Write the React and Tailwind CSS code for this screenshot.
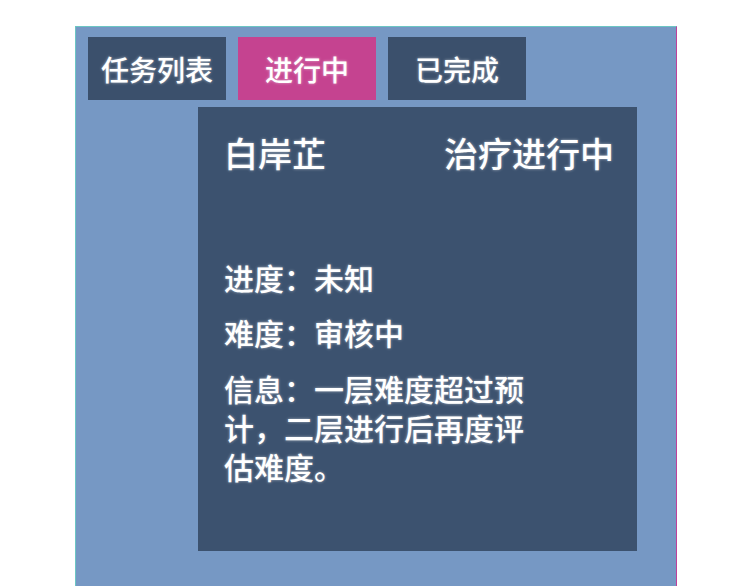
import React from "react";

const tabs = [
  { label: "任务列表", active: false },
  { label: "进行中", active: true },
  { label: "已完成", active: false },
];

const glow = "[text-shadow:0_0_3px_rgba(255,255,255,0.55)]";

const App = () => {
  return (
    <div className="w-[750px] h-[586px] overflow-hidden bg-white font-['Noto_Sans_CJK_SC','Noto_Sans',sans-serif]">
      <div className="ml-[75px] mt-[26px] w-[602px] h-[600px] bg-[#7698c4] border-t border-l border-t-[#6cc6c4] border-l-[#6cc6c4] border-r border-r-[#c0409a]">
        {/* tabs */}
        <div className="flex gap-3 pl-3 pt-[10px]">
          {tabs.map((t) => (
            <div
              key={t.label}
              className={`w-[138px] h-[63px] flex items-center justify-center text-white text-[28px] font-medium ${glow} ${
                t.active ? "bg-[#c54390]" : "bg-[#3b506c]"
              }`}
            >
              {t.label}
            </div>
          ))}
        </div>

        {/* card */}
        <div className="ml-[122px] mt-[7px] w-[439px] h-[444px] bg-[#3c526f] pl-[26px] pr-[23px] pt-[23px] text-white font-medium">
          <div className={`flex justify-between text-[34px] leading-[46px] ${glow}`}>
            <span>白岸芷</span>
            <span>治疗进行中</span>
          </div>
          <p className={`mt-[81px] text-[30px] leading-[40px] ${glow}`}>进度：未知</p>
          <p className={`mt-[15px] text-[30px] leading-[40px] ${glow}`}>难度：审核中</p>
          <p className={`mt-[17px] w-[318px] text-[30px] leading-[39px] ${glow}`}>
            信息：一层难度超过预计，二层进行后再度评估难度。
          </p>
        </div>
      </div>
    </div>
  );
};

export default App;
